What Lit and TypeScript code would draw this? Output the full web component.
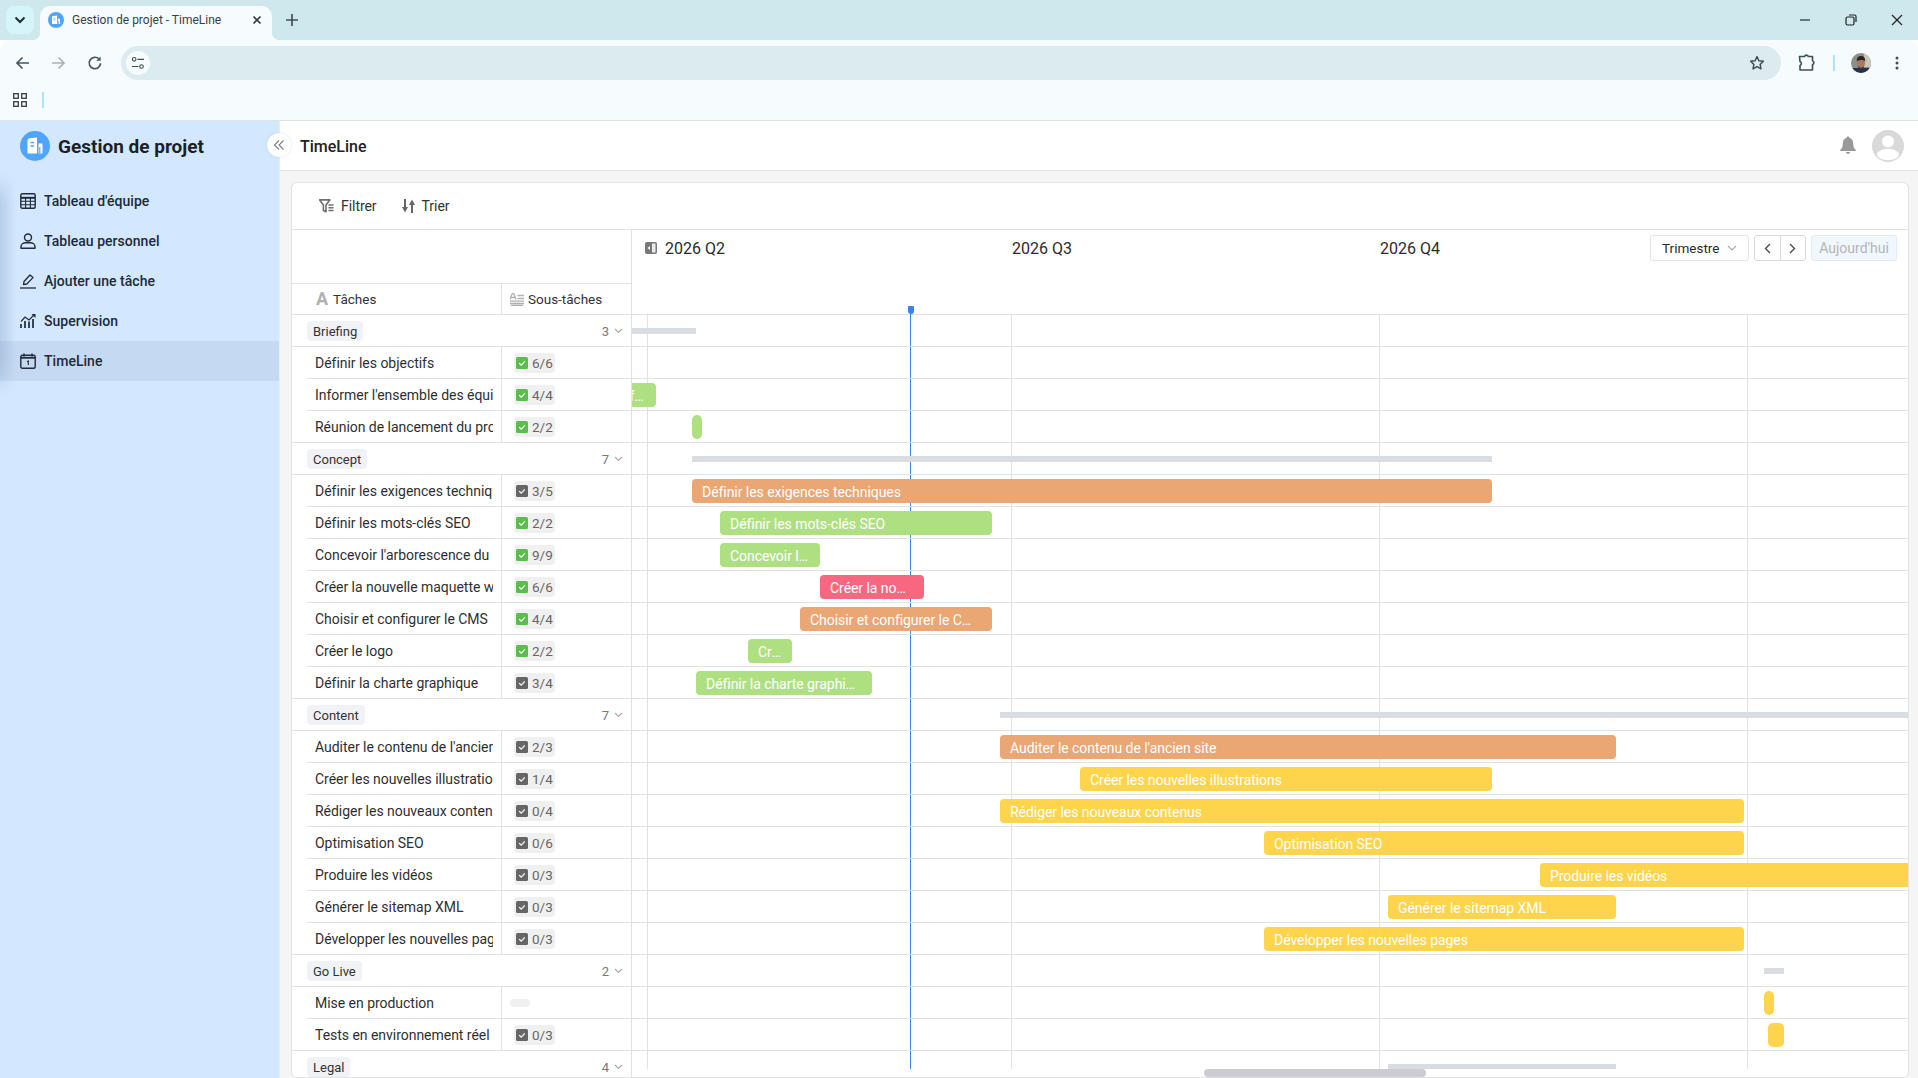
import { LitElement, html, css } from "lit";
import { customElement } from "lit/decorators.js";

type Bar = { x0: number; x1: number; color?: string; text?: string };
type Row = { kind: "group" | "task"; name: string; sub?: string; done?: boolean; empty?: boolean; last?: boolean; count?: number; bar?: Bar };

const G = "#aee082", O = "#eaa673", R = "#f7677f", Y = "#fdd44b";
const t = (name: string, sub: string, x0?: number, x1?: number, color?: string, last = false, text?: string): Row => {
  const [a, b] = sub.split("/");
  return { kind: "task", name, sub, done: a === b, last, bar: x0 != null ? { x0, x1: x1!, color, text: text ?? name } : undefined };
};
const g = (name: string, count: number, x0: number, x1: number): Row => ({ kind: "group", name, count, bar: { x0, x1 } });

const ROWS: Row[] = [
  g("Briefing", 3, 600, 696),
  t("Définir les objectifs", "6/6"),
  t("Informer l'ensemble des équipes", "4/4", 608, 656, G),
  t("Réunion de lancement du projet", "2/2", 692, 702, G, true, ""),
  g("Concept", 7, 692, 1492),
  t("Définir les exigences techniques", "3/5", 692, 1492, O),
  t("Définir les mots-clés SEO", "2/2", 720, 992, G),
  t("Concevoir l'arborescence du site", "9/9", 720, 820, G),
  t("Créer la nouvelle maquette web", "6/6", 820, 924, R, false, "Créer la no…"),
  t("Choisir et configurer le CMS", "4/4", 800, 992, O),
  t("Créer le logo", "2/2", 748, 792, G),
  t("Définir la charte graphique", "3/4", 696, 872, G, true),
  g("Content", 7, 1000, 2000),
  t("Auditer le contenu de l'ancien site", "2/3", 1000, 1616, O),
  t("Créer les nouvelles illustrations", "1/4", 1080, 1492, Y),
  t("Rédiger les nouveaux contenus", "0/4", 1000, 1744, Y),
  t("Optimisation SEO", "0/6", 1264, 1744, Y),
  t("Produire les vidéos", "0/3", 1540, 2000, Y),
  t("Générer le sitemap XML", "0/3", 1388, 1616, Y),
  t("Développer les nouvelles pages", "0/3", 1264, 1744, Y, true),
  g("Go Live", 2, 1764, 1784),
  { kind: "task", name: "Mise en production", empty: true, bar: { x0: 1764, x1: 1774, color: Y, text: "" } },
  t("Tests en environnement réel", "0/3", 1768, 1784, Y, true, ""),
  g("Legal", 4, 1388, 1616),
];

const logo = (size: number) => html`<svg width=${size} height=${size} viewBox="0 0 30 30">
  <circle cx="15" cy="15" r="15" fill="#4fa5fb"/>
  <path d="M7.500 22.500V9.500Q7.500 7.500 9.500 7.300L17 6.500V22.500zM18.500 22.500V12.500H22.500V22.500z" fill="#fff"/>
  <path d="M10.500 11.500h3.500M10.500 15h3.500" stroke="#4fa5fb" stroke-width="1.500"/>
  <path d="M19.800 16v6.500" stroke="#4fa5fb" stroke-width="1.200"/>
</svg>`;

@customElement("app-root")
export class AppRoot extends LitElement {
  static styles = css`
    :host { display: flex; flex-direction: column; width: 100vw; height: 100vh; overflow: hidden; font-family: "Roboto", "Noto Sans", sans-serif; font-size: 14px; color: #2b2b2b; background: #fff; }
    svg { display: block; flex: none; }

    .strip { height: 40px; background: #cfe8ed; display: flex; align-items: flex-start; flex: none; position: relative; }
    .tabs-btn { width: 28px; height: 28px; margin: 6px 6px 0 6px; border-radius: 8px; background: #d5f5fb; display: flex; align-items: center; justify-content: center; }
    .tab { width: 232px; height: 34px; margin-top: 6px; background: #f6fbfe; border-radius: 10px 10px 0 0; display: flex; align-items: center; padding: 0 10px 6px 8px; box-sizing: border-box; position: relative; z-index: 1; font-size: 12px; color: #3c4043; }
    .tab::before, .tab::after { content: ""; position: absolute; bottom: 0; width: 8px; height: 8px; }
    .tab::before { left: -8px; background: radial-gradient(circle at 0 0, transparent 8px, #f6fbfe 8.5px); }
    .tab::after { right: -8px; background: radial-gradient(circle at 100% 0, transparent 8px, #f6fbfe 8.5px); }
    .tab-title { margin-left: 8px; flex: 1; white-space: nowrap; overflow: hidden; }
    .new-tab { margin: 12px 0 0 12px; }
    .win { margin-left: auto; display: flex; gap: 30px; margin-top: 12px; padding-right: 13px; }

    .toolbar { height: 40px; flex: none; background: #f6fbfe; border-radius: 10px 10px 0 0; display: flex; align-items: center; padding-left: 14px; box-sizing: border-box; }
    .nav-ico { width: 18px; margin-right: 17px; margin-top: 6px; }
    .nav-ico.reload { margin-left: 2px; margin-right: 17px; }
    .address { flex: 1; height: 34px; margin-top: 6px; background: #dcebef; border-radius: 17px; display: flex; align-items: center; justify-content: space-between; padding: 0 15px 0 5px; }
    .site { width: 24px; height: 24px; border-radius: 50%; background: #f6fbfe; display: flex; align-items: center; justify-content: center; }
    .tool-right { display: flex; align-items: center; width: 137px; margin-top: 6px; box-sizing: border-box; padding-left: 16px; }
    .vsep { width: 2px; height: 16px; background: #a5e8fb; flex: none; }
    .bookmarks { height: 41px; flex: none; background: #f6fbfe; border-bottom: 1px solid #dde4e6; box-sizing: border-box; display: flex; align-items: center; padding-left: 13px; gap: 15px; }

    .app { flex: 1; display: flex; min-height: 0; }
    .side { width: 280px; flex: none; background: #d3e8fe; border-right: 1px solid #e8eef5; box-sizing: border-box; position: relative; display: flex; flex-direction: column; }
    .side-head { height: 50px; flex: none; display: flex; align-items: center; gap: 8px; padding-left: 20px; font-size: 19px; font-weight: 700; color: #1c1f26; }
    .collapse { position: absolute; right: -12px; top: 12px; width: 24px; height: 24px; border-radius: 50%; background: #fff; box-shadow: 0 0 3px rgba(0,0,0,.12); display: flex; align-items: center; justify-content: center; z-index: 2; }
    .menu { flex: 1; padding-top: 10px; position: relative; }
    .menu::before { content: ""; position: absolute; left: 0; top: 0; width: 16px; height: 225px; background: linear-gradient(to right, rgba(110,140,180,.28), rgba(110,140,180,0)); -webkit-mask-image: linear-gradient(to bottom, transparent, #000 15%, #000 85%, transparent); mask-image: linear-gradient(to bottom, transparent, #000 15%, #000 85%, transparent); z-index: 1; }
    .item { height: 40px; display: flex; align-items: center; gap: 8px; padding-left: 20px; font-weight: 500; color: #202a38; font-size: 14px; letter-spacing: 0.03px; }
    .item.active { background: #c5daf2; }

    .main { flex: 1; min-width: 0; display: flex; flex-direction: column; background: #f5f5f5; }
    .top { height: 50px; flex: none; background: #fff; border-bottom: 1px solid #e4e4e4; box-sizing: border-box; display: flex; align-items: center; padding: 0 14px 0 20px; font-size: 16px; font-weight: 500; color: #222; }
    .top-title { padding-top: 2px; }
    .top-right { margin-left: auto; display: flex; align-items: center; gap: 15px; }
    .card { flex: 1; min-height: 0; margin: 11px 9px 0 11px; background: #fff; border: 1px solid #e2e2e2; border-radius: 6px; display: flex; flex-direction: column; overflow: hidden; }
    .actions { height: 47px; flex: none; box-sizing: border-box; border-bottom: 1px solid #e2e2e2; display: flex; align-items: center; padding-left: 27px; color: #333; font-size: 14px; }
    .action { display: flex; align-items: center; gap: 7px; margin-right: 25px; letter-spacing: -0.05px; }

    .gantt { flex: 1; min-height: 0; display: flex; }
    .left { width: 340px; flex: none; border-right: 1px solid #e2e2e2; box-sizing: border-box; overflow: hidden; }
    .left-top { height: 54px; box-sizing: border-box; border-bottom: 1px solid #e2e2e2; }
    .cols { height: 31px; box-sizing: border-box; border-bottom: 1px solid #e2e2e2; display: flex; font-size: 13.5px; color: #333; }
    .col1 { width: 210px; flex: none; box-sizing: border-box; border-right: 1px solid #e2e2e2; display: flex; align-items: center; padding-left: 24px; gap: 5px; }
    .col2 { flex: 1; display: flex; align-items: center; padding-left: 8px; gap: 4px; }
    .letter { font-weight: 700; font-size: 18px; color: #b0b0b0; line-height: 1; }

    .grow { height: 32px; box-sizing: border-box; border-bottom: 1px solid #e2e2e2; display: flex; align-items: center; padding: 0 8px 0 15px; }
    .tag { height: 20px; background: #f0f2f5; border-radius: 4px; padding: 0 6px; font-size: 13px; line-height: 21px; color: #333; }
    .count { margin-left: auto; color: #777; font-size: 13px; margin-right: 5px; padding-top: 1px; }
    .task { height: 32px; box-sizing: border-box; border-bottom: 1px solid #e2e2e2; display: flex; margin-left: 15px; }
    .task.last { margin-left: 0; padding-left: 15px; }
    .name { width: 194px; box-sizing: border-box; padding-left: 8px; display: flex; align-items: center; flex: none; }
    .name span { display: block; width: 178px; overflow: hidden; white-space: nowrap; font-size: 14px; color: #2f2f2f; letter-spacing: -0.03px; }
    .sub { flex: 1; border-left: 1px solid #e2e2e2; padding-left: 12px; display: flex; align-items: center; }
    .chip { height: 20px; width: 41px; box-sizing: border-box; background: #f0f0f0; border-radius: 4px; display: flex; align-items: center; gap: 4px; padding-left: 2px; font-size: 13.5px; color: #666; }
    .chip span { padding-top: 1px; }
    .chip.blank { height: 8px; width: 20px; padding: 0; margin-left: -4px; }

    .right { flex: 1; min-width: 0; display: flex; flex-direction: column; position: relative; overflow: hidden; }
    .thead { height: 85px; flex: none; box-sizing: border-box; border-bottom: 1px solid #e2e2e2; display: flex; align-items: flex-start; }
    .q { font-size: 16px; color: #2b2b2b; height: 37px; display: flex; align-items: center; flex: none; }
    .q1 { width: 367px; margin-left: 13px; gap: 8px; }
    .q2 { width: 368px; }
    .q3 { width: 270px; }
    .ctrl { display: flex; gap: 5px; margin-top: 5px; font-size: 13.5px; }
    .select { width: 99px; height: 26px; box-sizing: border-box; border: 1px solid #e2e2e2; border-radius: 3px; display: flex; align-items: center; justify-content: space-between; padding: 0 11px 0 11px; color: #2b2b2b; }
    .pager { width: 52px; height: 26px; box-sizing: border-box; border: 1px solid #d9d9d9; border-radius: 3px; display: flex; }
    .pager div { flex: 1; display: flex; align-items: center; justify-content: center; }
    .pager div + div { border-left: 1px solid #d9d9d9; }
    .today { width: 86px; height: 26px; box-sizing: border-box; background: #f0f7ff; border: 1px solid #e0ebf6; border-radius: 3px; display: flex; align-items: center; justify-content: center; color: #b5b5b5; font-size: 14px; }

    .tbody { flex: 1; min-height: 0; position: relative; overflow: hidden; }
    .vline { position: absolute; top: 0; bottom: 0; width: 1px; background: #e2e2e2; }
    .now { position: absolute; left: 278px; top: 76px; width: 1px; bottom: 8px; background: #3b82f0; }
    .now::before { content: ""; position: absolute; left: -2.5px; top: 0; width: 6px; height: 8px; background: #3b82f0; border-radius: 1px 1px 3px 3px; }
    .trow { height: 32px; box-sizing: border-box; border-bottom: 1px solid #e2e2e2; position: relative; z-index: 1; }
    .bar { position: absolute; top: 4px; height: 24px; border-radius: 4px; box-sizing: border-box; padding: 0 10px; color: #fff; font-size: 14px; line-height: 26px; letter-spacing: -0.05px; white-space: nowrap; overflow: hidden; text-overflow: ellipsis; }
    .bar.thin { border-radius: 5px; padding: 0; }
    .gbar { position: absolute; top: 13px; height: 6px; background: #d9dde2; }
    .track { height: 8px; flex: none; position: relative; }
    .thumb { width: 222px; height: 8px; margin-left: 572px; border-radius: 4px; background: #cdccd2; }
  `;

  private renderLeft(r: Row) {
    if (r.kind === "group") {
      return html`<div class="grow"><span class="tag">${r.name}</span><span class="count">${r.count}</span>
        <svg width="9" height="6" viewBox="0 0 9 6"><path d="M1 1l3.500 3.500L8 1" fill="none" stroke="#aaa" stroke-width="1.100"/></svg></div>`;
    }
    return html`<div class="task ${r.last ? "last" : ""}">
      <div class="name"><span>${r.name}</span></div>
      <div class="sub">${r.empty ? html`<div class="chip blank"></div>` : html`<div class="chip">
        <svg width="12" height="12" viewBox="0 0 12 12"><rect width="12" height="12" rx="1.500" fill=${r.done ? "#5dbb4f" : "#666"}/><path d="M3.200 6.200l2 2 3.600-3.800" fill="none" stroke="#fff" stroke-width="1.200"/></svg>
        <span>${r.sub}</span></div>`}</div>
    </div>`;
  }

  private renderRight(r: Row) {
    const b = r.bar;
    if (!b) return html`<div class="trow"></div>`;
    const style = `left:${b.x0 - 632}px;width:${b.x1 - b.x0}px`;
    if (r.kind === "group") return html`<div class="trow"><div class="gbar" style=${style}></div></div>`;
    return html`<div class="trow"><div class="bar ${b.text ? "" : "thin"}" style="${style};background:${b.color}">${b.text}</div></div>`;
  }

  render() {
    return html`
      <div class="strip">
        <div class="tabs-btn"><svg width="12" height="8" viewBox="0 0 12 8"><path d="M1.500 1.500L6 6l4.500-4.500" fill="none" stroke="#1f2a2e" stroke-width="2"/></svg></div>
        <div class="tab">
          ${logo(16)}
          <span class="tab-title">Gestion de projet - TimeLine</span>
          <svg width="10" height="10" viewBox="0 0 10 10"><path d="M1.500 1.500l7 7M8.500 1.500l-7 7" stroke="#333b3e" stroke-width="1.700"/></svg>
        </div>
        <svg class="new-tab" width="16" height="16" viewBox="0 0 16 16"><path d="M8 2v12M2 8h12" stroke="#3f5055" stroke-width="1.700"/></svg>
        <div class="win">
          <svg width="16" height="16" viewBox="0 0 16 16"><path d="M3 8h10" stroke="#4a5a5f" stroke-width="1.600"/></svg>
          <svg width="16" height="16" viewBox="0 0 16 16"><rect x="3" y="5" width="8" height="8" rx="1.500" fill="none" stroke="#222" stroke-width="1.200"/><path d="M6 3h5.500A1.500 1.500 0 0 1 13 4.500V10" fill="none" stroke="#222" stroke-width="1.200"/></svg>
          <svg width="16" height="16" viewBox="0 0 16 16"><path d="M3 3l10 10M13 3L3 13" stroke="#222" stroke-width="1.200"/></svg>
        </div>
      </div>
      <div class="toolbar">
        <div class="nav-ico"><svg width="18" height="18" viewBox="0 0 18 18"><path d="M15 9H3.500M8.500 3.500L3 9l5.500 5.500" fill="none" stroke="#47575c" stroke-width="1.700"/></svg></div>
        <div class="nav-ico"><svg width="18" height="18" viewBox="0 0 18 18"><path d="M3 9h11.500M9.500 3.500L15 9l-5.500 5.500" fill="none" stroke="#aab4b8" stroke-width="1.700"/></svg></div>
        <div class="nav-ico reload"><svg width="18" height="18" viewBox="0 0 18 18"><path d="M14.600 9.400A5.700 5.700 0 1 1 13 5" fill="none" stroke="#47575c" stroke-width="1.700"/><path d="M14.600 2.600V6.800H10.400z" fill="#47575c"/></svg></div>
        <div class="address">
          <div class="site"><svg width="14" height="14" viewBox="0 0 14 14"><circle cx="3.200" cy="3.300" r="1.800" fill="none" stroke="#3f4f54" stroke-width="1.100"/><path d="M6.500 3.300h6.500M1 10.500h6.500" stroke="#3f4f54" stroke-width="1.200"/><circle cx="10.500" cy="10.500" r="1.800" fill="none" stroke="#3f4f54" stroke-width="1.100"/></svg></div>
          <svg width="16" height="16" viewBox="0 0 16 16" style="margin-right:1px"><path d="M8 1.600l1.900 4.200 4.500.5-3.300 3.100.9 4.500L8 11.600l-4 2.300.9-4.500L1.600 6.300l4.500-.5z" fill="none" stroke="#3b4a4f" stroke-width="1.400" stroke-linejoin="round"/></svg>
        </div>
        <div class="tool-right">
          <svg width="20" height="20" viewBox="0 0 20 20"><path d="M2.500 3.500h5a2 2 0 0 1 3.800 0H15.500v4.300a2 2 0 0 1 0 3.800V17H3v-4.600a2 2 0 0 0 0-3.800z" fill="none" stroke="#3f5055" stroke-width="1.600" stroke-linejoin="round"/></svg>
          <div class="vsep" style="margin-left:16px"></div>
          <svg style="margin-left:16px" width="20" height="20" viewBox="0 0 20 20"><defs><clipPath id="av"><circle cx="10" cy="10" r="10"/></clipPath></defs><g clip-path="url(#av)"><rect width="20" height="20" fill="#8d8f88"/><rect x="13" width="7" height="14" fill="#c9c6b8"/><rect y="15" width="20" height="5" fill="#26324a"/><ellipse cx="10" cy="10" rx="4" ry="5.200" fill="#a67a62"/><path d="M5.800 8.500C5.500 4 8 3 10 3s4.500 1 4.200 5.500C13 6.500 8 6.500 5.800 8.500z" fill="#2d241e"/><path d="M6.500 12c1 3.500 6 3.500 7 0l-1 3h-5z" fill="#3a2c24"/></g></svg>
          <svg style="margin-left:24px" width="4" height="14" viewBox="0 0 4 14"><circle cx="2" cy="2" r="1.500" fill="#3f5055"/><circle cx="2" cy="7" r="1.500" fill="#3f5055"/><circle cx="2" cy="12" r="1.500" fill="#3f5055"/></svg>
        </div>
      </div>
      <div class="bookmarks">
        <svg width="14" height="14" viewBox="0 0 14 14"><g fill="none" stroke="#44484a" stroke-width="1.400"><rect x=".7" y=".7" width="4.600" height="4.600"/><rect x="8.700" y=".7" width="4.600" height="4.600"/><rect x=".7" y="8.700" width="4.600" height="4.600"/><rect x="8.700" y="8.700" width="4.600" height="4.600"/></g></svg>
        <div class="vsep"></div>
      </div>
      <div class="app">
        <aside class="side">
          <div class="side-head">${logo(30)}<span>Gestion de projet</span></div>
          <div class="collapse"><svg width="12" height="12" viewBox="0 0 12 12"><path d="M6 1.500L1.500 6 6 10.500M10.500 1.500L6 6l4.500 4.500" fill="none" stroke="#777c84" stroke-width="1.100"/></svg></div>
          <nav class="menu">
            <div class="item"><svg width="16" height="16" viewBox="0 0 16 16"><rect x=".8" y=".8" width="14.400" height="14.400" rx="1.500" fill="none" stroke="#202a38" stroke-width="1.400"/><path d="M.8 4.800h14.400" stroke="#202a38" stroke-width="2"/><path d="M.8 8.200h14.400M.8 11.800h14.400M5.600 4.800v10.400M10.400 4.800v10.400" stroke="#202a38" stroke-width="1.100"/></svg><span>Tableau d'équipe</span></div>
            <div class="item"><svg width="16" height="16" viewBox="0 0 16 16"><circle cx="8" cy="4.500" r="3.500" fill="none" stroke="#202a38" stroke-width="1.400"/><path d="M1 15.200v-1.400C1 11 3.500 9.800 5.500 9.800h5c2 0 4.500 1.200 4.500 4v1.400z" fill="none" stroke="#202a38" stroke-width="1.400" stroke-linejoin="round"/></svg><span>Tableau personnel</span></div>
            <div class="item"><svg width="16" height="16" viewBox="0 0 16 16"><path d="M3.500 11.500l.5-3L10 2l3 2.600-6.200 6.400z" fill="none" stroke="#202a38" stroke-width="1.300" stroke-linejoin="round"/><path d="M0 15h16" stroke="#202a38" stroke-width="1.300"/></svg><span>Ajouter une tâche</span></div>
            <div class="item"><svg width="16" height="16" viewBox="0 0 16 16"><path d="M1 15V11M5 15V8M9 15V8.500M13 15V6" stroke="#202a38" stroke-width="1.700"/><path d="M1 8.500L5 4l4 3 5.500-5.500" fill="none" stroke="#202a38" stroke-width="1.200"/><path d="M11.500 1h4v4z" fill="#202a38"/></svg><span>Supervision</span></div>
            <div class="item active"><svg width="16" height="16" viewBox="0 0 16 16"><rect x=".8" y="2.300" width="14.400" height="12.900" rx="1.500" fill="none" stroke="#202a38" stroke-width="1.400"/><path d="M.8 4.800h14.400" stroke="#202a38" stroke-width="1.800"/><path d="M4 .5v3M12 .5v3" stroke="#202a38" stroke-width="1.500"/><path d="M7 8.700l1.300-.7v4" fill="none" stroke="#202a38" stroke-width="1.100"/></svg><span>TimeLine</span></div>
          </nav>
        </aside>
        <main class="main">
          <header class="top">
            <span class="top-title">TimeLine</span>
            <div class="top-right">
              <svg width="18" height="21" viewBox="0 0 16 20"><path d="M8 1.500c-.8 0-1.300.5-1.300 1.200C4 3.500 3 5.700 3 8.500c0 3-1 4.500-2.500 5.800v1h15v-1C14 13 13 11.500 13 8.500c0-2.800-1-5-3.700-5.800 0-.7-.5-1.200-1.300-1.200zM6 16.300c.2 1 1 1.700 2 1.700s1.800-.7 2-1.700z" fill="#999"/></svg>
              <svg width="32" height="32" viewBox="0 0 32 32"><defs><clipPath id="ua"><circle cx="16" cy="16" r="16"/></clipPath></defs><g clip-path="url(#ua)"><rect width="32" height="32" fill="#d9d9d9"/><circle cx="16" cy="11.500" r="6" fill="#fff"/><ellipse cx="16" cy="24.500" rx="11" ry="5.800" fill="#fff"/></g></svg>
            </div>
          </header>
          <section class="card">
            <div class="actions">
              <div class="action"><svg width="15" height="14" viewBox="0 0 15 14"><path d="M.6 .9h10.200l-3.800 5v7l-2.600-1.400V5.900z" fill="none" stroke="#6f6f6f" stroke-width="1.600" stroke-linejoin="round"/><path d="M9.500 6h5M9.500 8.700h5M9.500 11.400h5" stroke="#6f6f6f" stroke-width="1.500"/></svg><span>Filtrer</span></div>
              <div class="action"><svg width="13" height="14" viewBox="0 0 13 14"><path d="M3 0v9" stroke="#666" stroke-width="2"/><path d="M0 8h6l-3 5.500z" fill="#666"/><path d="M10 14V5" stroke="#666" stroke-width="2"/><path d="M7 6h6L10 .5z" fill="#666"/></svg><span>Trier</span></div>
            </div>
            <div class="gantt">
              <div class="left">
                <div class="left-top"></div>
                <div class="cols">
                  <div class="col1"><span class="letter">A</span><span>Tâches</span></div>
                  <div class="col2"><svg width="14" height="13" viewBox="0 0 14 13"><path d="M0 6.500l2.500-6.500h1L6 6.500M1 4.500h4" fill="none" stroke="#b0b0b0" stroke-width="1.300"/><path d="M7.500 2.500H14M7.500 5.500H14M0 8.200h14M0 10.500h14M.8 12.500H13" stroke="#b0b0b0" stroke-width="1.300"/></svg><span>Sous-tâches</span></div>
                </div>
                ${ROWS.map((r) => this.renderLeft(r))}
              </div>
              <div class="right">
                <div class="thead">
                  <div class="q q1"><svg width="12" height="12" viewBox="0 0 12 12" style="margin-top:-2px"><rect width="12" height="12" rx="2" fill="#777"/><rect x="7" y="1.500" width="3.500" height="9" fill="#fff" opacity=".85"/><path d="M5 4v4L2.500 6z" fill="#fff"/></svg><span>2026 Q2</span></div>
                  <div class="q q2">2026 Q3</div>
                  <div class="q q3">2026 Q4</div>
                  <div class="ctrl">
                    <div class="select"><span>Trimestre</span><svg width="10" height="6" viewBox="0 0 10 6"><path d="M1 1l4 4 4-4" fill="none" stroke="#aaa" stroke-width="1.200"/></svg></div>
                    <div class="pager">
                      <div><svg width="7" height="11" viewBox="0 0 7 11"><path d="M6 1L1.500 5.500 6 10" fill="none" stroke="#444" stroke-width="1.300"/></svg></div>
                      <div><svg width="7" height="11" viewBox="0 0 7 11"><path d="M1 1l4.500 4.500L1 10" fill="none" stroke="#444" stroke-width="1.300"/></svg></div>
                    </div>
                    <div class="today">Aujourd'hui</div>
                  </div>
                </div>
                <div class="tbody">
                  <div class="vline" style="left:15px"></div>
                  <div class="vline" style="left:379px"></div>
                  <div class="vline" style="left:747px"></div>
                  <div class="vline" style="left:1115px"></div>
                  ${ROWS.map((r) => this.renderRight(r))}
                </div>
                <div class="track"><div class="thumb"></div></div>
                <div class="now"></div>
              </div>
            </div>
          </section>
        </main>
      </div>
    `;
  }
}
